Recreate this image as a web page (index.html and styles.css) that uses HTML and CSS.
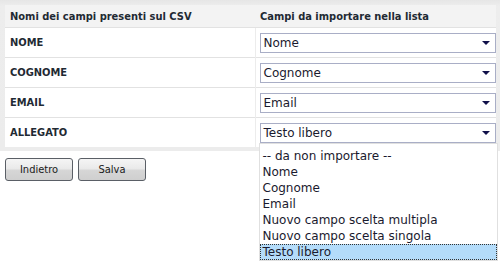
FILE: index.html
```html
<!DOCTYPE html>
<html>
<head>
<meta charset="utf-8">
<link rel="stylesheet" href="styles.css">
</head>
<body>
<div class="page">
  <div class="panel">
    <table class="map">
      <thead>
        <tr><th class="c1">Nomi dei campi presenti sul CSV</th><th class="c2">Campi da importare nella lista</th></tr>
      </thead>
      <tbody>
        <tr><td class="c1">NOME</td><td class="c2"><div class="sel"><span>Nome</span><i class="arr"></i></div></td></tr>
        <tr><td class="c1">COGNOME</td><td class="c2"><div class="sel"><span>Cognome</span><i class="arr"></i></div></td></tr>
        <tr><td class="c1">EMAIL</td><td class="c2"><div class="sel"><span>Email</span><i class="arr"></i></div></td></tr>
        <tr><td class="c1">ALLEGATO</td><td class="c2"><div class="sel open"><span>Testo libero</span><i class="arr"></i>
          <ul class="drop">
            <li>-- da non importare --</li>
            <li>Nome</li>
            <li>Cognome</li>
            <li>Email</li>
            <li>Nuovo campo scelta multipla</li>
            <li>Nuovo campo scelta singola</li>
            <li class="hl">Testo libero</li>
          </ul></div></td></tr>
      </tbody>
    </table>
  </div>
  <div class="actions">
    <button class="btn">Indietro</button>
    <button class="btn">Salva</button>
  </div>
</div>
</body>
</html>
```
FILE: styles.css
```css
html, body { margin: 0; padding: 0; background: #fff; }
body { font-family: Tahoma, "DejaVu Sans Condensed", "DejaVu Sans", sans-serif; color: #222; }
.page { width: 502px; height: 261px; overflow: hidden; }
.panel {
  width: 500px;
  box-sizing: border-box;
  padding: 5px 4px 4px 5px;
  background: linear-gradient(#e6e6e6, #ededed 6px, #ececec);
}
.map { width: 491px; border-collapse: collapse; table-layout: fixed; }
.map th {
  background: #f3f3f3;
  height: 22px;
  padding: 0 0 0 5px;
  text-align: left;
  font-size: 11px;
  font-weight: bold;
  color: #1f2a33;
}
.map td {
  background: #fff;
  height: 29px;
  border-top: 1px solid #e2e2e2;
  padding: 0 0 0 5px;
  font-size: 11px;
  font-weight: bold;
  color: #1f2a33;
}
.map .c1 { width: 245px; }
.map td.c2 { border-left: 1px solid #ececec; padding-left: 4px; }
.map th.c2 { padding-left: 5px; }
.sel {
  position: relative;
  width: 236px;
  height: 20px;
  box-sizing: border-box;
  border: 1px solid #a9aec6;
  background: #fff;
  font-family: "DejaVu Sans", sans-serif;
  font-weight: normal;
  font-size: 12px;
  color: #1a1a2e;
  display: flex;
  align-items: center;
  padding-left: 3px;
}
.arr {
  position: absolute;
  right: 5px;
  top: 7px;
  width: 0; height: 0;
  border-left: 4px solid transparent;
  border-right: 4px solid transparent;
  border-top: 4px solid #10104a;
}
.drop {
  position: absolute;
  left: -2px;
  top: 19px;
  width: 239px;
  margin: 0;
  padding: 4px 0 0 0;
  list-style: none;
  background: #fff;
  border: 1px solid #e0e0e0;
  box-sizing: border-box;
  z-index: 5;
}
.drop li {
  height: 16px;
  line-height: 16px;
  padding-left: 3px;
  font-size: 12px;
  color: #1a1a2e;
}
.drop li.hl {
  background: #b4dcfa;
  outline: 1px dotted #333;
  outline-offset: -1px;
}
.actions { display: flex; gap: 5px; padding: 7px 0 0 5px; }
.btn {
  width: 68px;
  height: 23px;
  border: 1px solid #5a5f66;
  border-radius: 3px;
  background: linear-gradient(#f5f5f5, #eaeaea 45%, #d6d6d6 55%, #cfcfcf);
  font-family: Tahoma, "DejaVu Sans Condensed", "DejaVu Sans", sans-serif;
  font-size: 11px;
  color: #1a1a1a;
  padding: 0;
}
```
